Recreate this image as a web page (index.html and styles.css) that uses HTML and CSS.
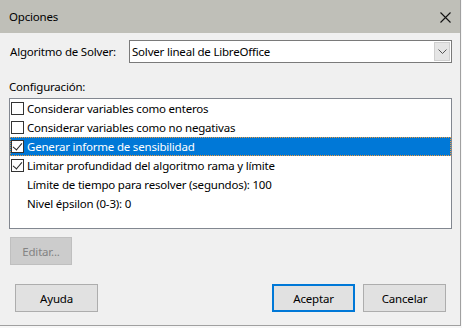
FILE: index.html
```html
<!DOCTYPE html>
<html lang="es">
<head>
    <meta charset="UTF-8">
    <title>Opciones</title>
    <link rel="stylesheet" href="styles.css">
</head>
<body>
    <div class="window">
        <div class="titlebar">
            <span class="title">Opciones</span>
            <svg class="close" width="11" height="11" viewBox="0 0 11 11">
                <path d="M0.5 0.5 L10.5 10.5 M10.5 0.5 L0.5 10.5" stroke="#111" stroke-width="1.1" fill="none"/>
            </svg>
        </div>

        <div class="content">
            <div class="solver-row">
                <span class="label">Algoritmo de Solver:</span>
                <div class="combo">
                    <span class="combo-text">Solver lineal de LibreOffice</span>
                    <span class="combo-btn">
                        <svg width="9" height="5" viewBox="0 0 9 5">
                            <path d="M0.5 0.5 L4.5 4.5 L8.5 0.5" stroke="#555" stroke-width="1" fill="none"/>
                        </svg>
                    </span>
                </div>
            </div>

            <div class="section-label">Configuración:</div>

            <div class="listbox">
                <div class="row"><span class="check"></span>Considerar variables como enteros</div>
                <div class="row"><span class="check"></span>Considerar variables como no negativas</div>
                <div class="row selected"><span class="check checked"></span>Generar informe de sensibilidad</div>
                <div class="row"><span class="check checked"></span>Limitar profundidad del algoritmo rama y límite</div>
                <div class="row sub">Límite de tiempo para resolver (segundos): 100</div>
                <div class="row sub">Nivel épsilon (0-3): 0</div>
            </div>

            <button class="btn disabled edit">Editar...</button>

            <div class="buttons">
                <button class="btn">Ayuda</button>
                <span class="spacer"></span>
                <button class="btn default">Aceptar</button>
                <button class="btn">Cancelar</button>
            </div>
        </div>
    </div>
</body>
</html>
```

FILE: styles.css
```css
body {
    margin: 0;
    background-color: #f7f7f7;
    font-family: "Noto Sans", "Open Sans", sans-serif;
    font-size: 11.5px;
    letter-spacing: -0.2px;
    color: #000;
}

.window {
    width: 460px;
    height: 325px;
    background-color: #f0f0f0;
    border-right: 1px solid #a0a0a0;
    border-bottom: 1px solid #a0a0a0;
}

.titlebar {
    height: 33px;
    background-color: #bfbfb8;
    display: flex;
    align-items: center;
    padding-left: 9px;
    padding-right: 9px;
}

.title {
    flex: 1;
}

.close {
    display: block;
    margin-top: 1px;
}

.content {
    padding: 7px 8px 0 9px;
}

.solver-row {
    display: flex;
    align-items: center;
    height: 23px;
}

.label {
    padding-left: 1px;
}

.combo {
    margin-left: auto;
    width: 321px;
    height: 21px;
    border: 1px solid #7a7a7a;
    background-color: #fff;
    display: flex;
    align-items: center;
}

.combo-text {
    flex: 1;
    padding-left: 2px;
}

.combo-btn {
    width: 16px;
    height: 19px;
    margin-right: 1px;
    background-color: #e5e5e5;
    border: 1px solid #cfcfcf;
    display: flex;
    align-items: center;
    justify-content: center;
    box-sizing: border-box;
}

.section-label {
    margin-top: 16px;
    height: 16px;
    line-height: 16px;
}

.listbox {
    margin-top: 3px;
    height: 129px;
    border: 1px solid #828790;
    background-color: #fff;
}

.row {
    height: 19px;
    display: flex;
    align-items: center;
    padding-left: 1px;
    white-space: nowrap;
}

.row.selected {
    background-color: #0078d7;
    color: #fff;
    outline: 1px dotted #f09a3a;
    outline-offset: -1px;
}

.row.sub {
    padding-left: 17px;
}

.check {
    width: 11px;
    height: 11px;
    border: 1px solid #333;
    background-color: #fff;
    margin-right: 3px;
    position: relative;
}

.check.checked::after {
    content: "";
    position: absolute;
    left: 3px;
    top: 0px;
    width: 4px;
    height: 8px;
    border-right: 1px solid #222;
    border-bottom: 1px solid #222;
    transform: rotate(40deg);
}

.btn {
    font-family: inherit;
    font-size: 11.5px;
    letter-spacing: -0.2px;
    color: #000;
    background-color: #e1e1e1;
    border: 1px solid #adadad;
    width: 83px;
    height: 28px;
    padding: 0;
    box-sizing: border-box;
}

.btn.default {
    border: 2px solid #0078d7;
}

.btn.disabled {
    background-color: #cccccc;
    border-color: #bfbfbf;
    color: #838383;
}

.edit {
    display: block;
    width: 62px;
    margin-top: 8px;
    margin-left: 1px;
}

.buttons {
    display: flex;
    gap: 8px;
    margin-top: 19px;
    padding-left: 6px;
    padding-right: 6px;
}

.spacer {
    flex: 1;
}
```
